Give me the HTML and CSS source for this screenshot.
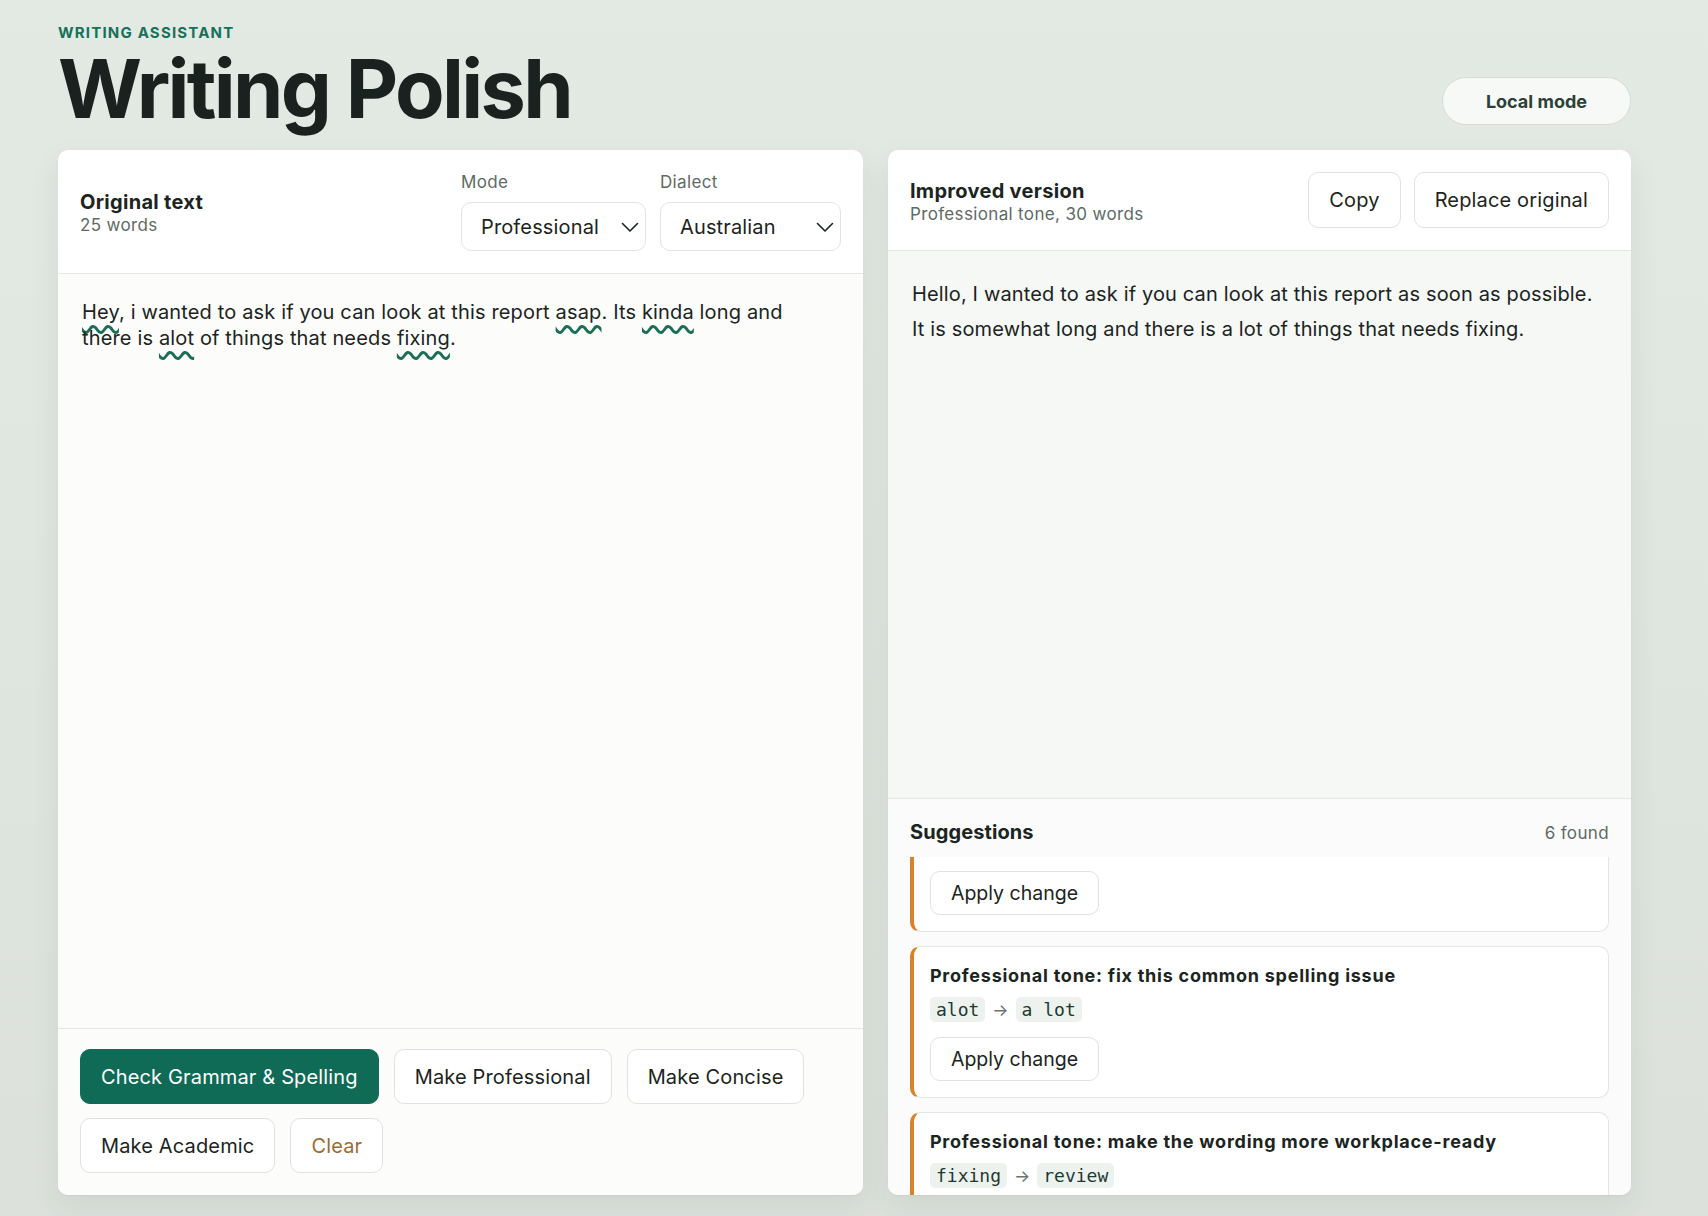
FILE: index.html
```html
<!DOCTYPE html>
<html lang="en">
<head>
  <meta charset="UTF-8" />
  <title>Writing Polish</title>
  <link rel="stylesheet" href="styles.css">
</head>
<body>
  <div class="page">

    <header class="top">
      <div>
        <p class="eyebrow">WRITING ASSISTANT</p>
        <h1>Writing Polish</h1>
      </div>
      <span class="pill">Local mode</span>
    </header>

    <main class="grid">
      <!-- Original text -->
      <section class="card">
        <div class="card-head">
          <div class="head-title">
            <h2>Original text</h2>
            <p>25 words</p>
          </div>
          <div class="pickers">
            <div class="picker">
              <span class="picker-label">Mode</span>
              <div class="select select-mode">
                <span>Professional</span>
                <svg width="18" height="18" viewBox="0 0 18 18"><path d="M1.5 5.5 9 13l7.5-7.5" fill="none" stroke="#1b2421" stroke-width="1.6" stroke-linecap="round" stroke-linejoin="round"/></svg>
              </div>
            </div>
            <div class="picker">
              <span class="picker-label">Dialect</span>
              <div class="select select-dialect">
                <span>Australian</span>
                <svg width="18" height="18" viewBox="0 0 18 18"><path d="M1.5 5.5 9 13l7.5-7.5" fill="none" stroke="#1b2421" stroke-width="1.6" stroke-linecap="round" stroke-linejoin="round"/></svg>
              </div>
            </div>
          </div>
        </div>

        <div class="editor">
          <span class="flag">Hey</span>, i wanted to ask if you can look at this report <span class="flag">asap</span>. Its <span class="flag">kinda</span> long and there is <span class="flag">alot</span> of things that needs <span class="flag">fixing</span>.
        </div>

        <div class="actions">
          <button class="btn btn-primary">Check Grammar &amp; Spelling</button>
          <button class="btn">Make Professional</button>
          <button class="btn">Make Concise</button>
          <button class="btn">Make Academic</button>
          <button class="btn btn-clear">Clear</button>
        </div>
      </section>

      <!-- Improved version -->
      <section class="card">
        <div class="card-head">
          <div class="head-title">
            <h2>Improved version</h2>
            <p>Professional tone, 30 words</p>
          </div>
          <div class="head-actions">
            <button class="btn btn-head">Copy</button>
            <button class="btn btn-head">Replace original</button>
          </div>
        </div>

        <div class="output">
          <p>Hello, I wanted to ask if you can look at this report as soon as possible. It is somewhat long and there is a lot of things that needs fixing.</p>
        </div>

        <div class="suggestions">
          <div class="sugg-head">
            <h3>Suggestions</h3>
            <span class="sugg-count">6 found</span>
          </div>
          <div class="sugg-list">
            <div class="sugg-card sugg-scrolled">
              <p class="sugg-title">Professional tone: use more formal wording</p>
              <div class="swap"><code class="chip">kinda</code><span class="arrow">→</span><code class="chip">somewhat</code></div>
              <button class="btn btn-apply">Apply change</button>
            </div>
            <div class="sugg-card">
              <p class="sugg-title">Professional tone: fix this common spelling issue</p>
              <div class="swap"><code class="chip">alot</code><span class="arrow">→</span><code class="chip">a lot</code></div>
              <button class="btn btn-apply">Apply change</button>
            </div>
            <div class="sugg-card">
              <p class="sugg-title">Professional tone: make the wording more workplace-ready</p>
              <div class="swap"><code class="chip">fixing</code><span class="arrow">→</span><code class="chip">review</code></div>
              <button class="btn btn-apply">Apply change</button>
            </div>
          </div>
        </div>
      </section>
    </main>

  </div>
</body>
</html>
```

FILE: styles.css
```css
body {
  margin: 0;
  font-family: Inter, "Noto Sans", sans-serif;
  color: #1b2421;
  background: linear-gradient(180deg, #e3e9e3 0%, #dce2db 100%);
  min-height: 100vh;
}

.page {
  padding: 24px 77px 0 58px;
}

/* header */
.top {
  display: flex;
  justify-content: space-between;
  align-items: flex-end;
  margin-bottom: 20px;
}

.eyebrow {
  margin: 0;
  font-size: 15px;
  line-height: 18px;
  font-weight: 700;
  letter-spacing: 0.08em;
  color: #17705a;
}

h1 {
  margin: 7px 0 0;
  font-size: 81px;
  line-height: 81px;
  font-weight: 700;
  letter-spacing: -0.033em;
  color: #1a2220;
}

.pill {
  margin-bottom: 5px;
  height: 48px;
  box-sizing: border-box;
  padding: 0 43px;
  display: flex;
  align-items: center;
  border: 1px solid #d6ddd6;
  border-radius: 24px;
  background: #f6f9f6;
  font-size: 18px;
  font-weight: 700;
  color: #2c3f38;
}

/* cards */
.grid {
  display: grid;
  grid-template-columns: 13fr 12fr;
  gap: 25px;
  height: 1045px;
}

.card {
  display: flex;
  flex-direction: column;
  background: #fff;
  border-radius: 10px;
  overflow: hidden;
  box-shadow: 0 12px 30px rgba(40, 60, 50, 0.08), 0 1px 2px rgba(0, 0, 0, 0.04);
}

.card-head {
  display: flex;
  justify-content: space-between;
  align-items: center;
  padding: 22px;
  border-bottom: 1px solid #e3e8e3;
}

.head-title {
  padding-top: 3px;
}

.head-title h2 {
  margin: 0;
  font-size: 20px;
  line-height: 24px;
  font-weight: 700;
  letter-spacing: 0.3px;
}

.head-title p {
  margin: 1px 0 0;
  font-size: 17px;
  line-height: 21px;
  letter-spacing: 0.35px;
  color: #5e6a65;
}

.pickers {
  display: flex;
  gap: 14px;
}

.picker {
  display: flex;
  flex-direction: column;
  gap: 9px;
}

.picker-label {
  font-size: 17px;
  line-height: 21px;
  letter-spacing: 0.35px;
  color: #5e6a65;
}

.select {
  height: 49px;
  box-sizing: border-box;
  display: flex;
  align-items: center;
  justify-content: space-between;
  padding: 0 6px 0 19px;
  border: 1px solid #dfe5df;
  border-radius: 10px;
  background: #fff;
  font-size: 20px;
  letter-spacing: 0.15px;
}

.select-mode { width: 185px; }
.select-dialect { width: 181px; }

.editor {
  flex: 1;
  padding: 26px 70px 24px 24px;
  font-size: 20px;
  line-height: 25.5px;
  letter-spacing: 0.15px;
  background: #fcfcfb;
}

.flag {
  text-decoration: underline wavy #1c6e57;
  text-decoration-thickness: 2.6px;
  text-underline-offset: 6px;
}

.actions {
  display: flex;
  flex-wrap: wrap;
  gap: 14px 15px;
  padding: 20px 22px 22px;
  border-top: 1px solid #e3e8e3;
  background: #fcfcfb;
}

.btn {
  height: 55px;
  padding: 0 20px;
  border: 1px solid #dde3dd;
  border-radius: 10px;
  background: #fff;
  font-family: inherit;
  font-size: 20px;
  letter-spacing: 0.15px;
  color: #1b2421;
  cursor: pointer;
}

.btn-primary {
  background: #0f6b56;
  border-color: #0f6b56;
  color: #fff;
}

.btn-clear {
  color: #9a6b34;
}

.head-actions {
  display: flex;
  gap: 13px;
}

.btn-head {
  height: 56px;
}

.output {
  flex: 1;
  padding: 26px 24px 24px;
  font-size: 20px;
  line-height: 35px;
  letter-spacing: 0.15px;
  background: #f6f8f6;
}

.output p {
  margin: 0;
}

/* suggestions */
.suggestions {
  height: 397px;
  box-sizing: border-box;
  display: flex;
  flex-direction: column;
  border-top: 1px solid #e3e8e3;
  background: #fafbfa;
}

.sugg-head {
  display: flex;
  justify-content: space-between;
  align-items: center;
  padding: 22px 22px 13px;
}

.sugg-head h3 {
  margin: 0;
  font-size: 20px;
  line-height: 23px;
  font-weight: 700;
  letter-spacing: 0.1px;
}

.sugg-count {
  font-size: 17px;
  letter-spacing: 0.35px;
  color: #5e6a65;
}

.sugg-list {
  flex: 1;
  overflow: hidden;
  padding: 0 22px;
}

.sugg-card {
  margin-bottom: 14px;
  padding: 17px 16px 16px;
  border: 1px solid #e1e6e1;
  border-left: 4px solid #d9822b;
  border-radius: 10px;
  background: #fff;
}

/* list is scrolled a little */
.sugg-scrolled {
  margin-top: -77px;
}

.sugg-title {
  margin: 0;
  font-size: 18px;
  line-height: 23px;
  font-weight: 700;
  letter-spacing: 0.75px;
}

.swap {
  display: flex;
  align-items: center;
  gap: 7px;
  margin-top: 10px;
}

.chip {
  padding: 0 6px;
  border-radius: 5px;
  background: #eef2ee;
  font-family: "DejaVu Sans Mono", monospace;
  font-size: 18px;
  line-height: 25px;
  color: #1d3a31;
}

.arrow {
  font-size: 17px;
  color: #6a736f;
}

.btn-apply {
  display: block;
  height: 44px;
  margin-top: 15px;
  font-size: 19.5px;
  letter-spacing: 0;
}
```
